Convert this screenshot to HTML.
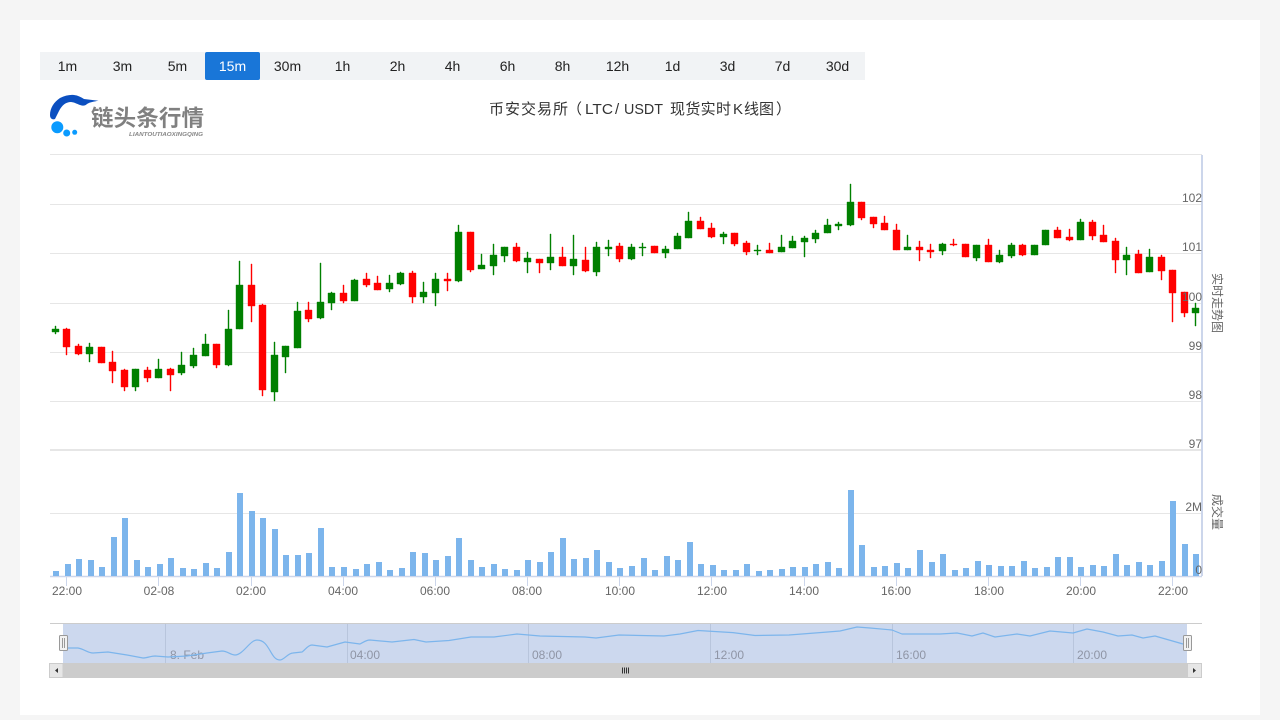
<!DOCTYPE html>
<html lang="zh"><head><meta charset="utf-8"><title>币安交易所 LTC/USDT</title>
<style>
html,body{margin:0;padding:0;width:1280px;height:720px;overflow:hidden;background:#f5f5f5}
.card{position:absolute;left:20px;top:20px;width:1240px;height:695px;background:#fff}
.bar{position:absolute;left:40px;top:52px;width:825px;height:28px;background:#f1f3f5;display:flex;font:14px/28px "Liberation Sans","Noto Sans CJK SC",sans-serif;color:#222}
.bar span{width:55px;text-align:center}
.bar .on{background:#1976d8;color:#fff;border-radius:2px}
svg{position:absolute;left:0;top:0}
text{font-family:"Liberation Sans","Noto Sans CJK SC",sans-serif}
</style></head><body>
<div class="card"></div>
<div class="bar"><span>1m</span><span>3m</span><span>5m</span><span class="on">15m</span><span>30m</span><span>1h</span><span>2h</span><span>4h</span><span>6h</span><span>8h</span><span>12h</span><span>1d</span><span>3d</span><span>7d</span><span>30d</span></div>
<svg width="1280" height="720" viewBox="0 0 1280 720">
<!-- logo -->
<path d="M50 115C50 108 54 102 60 98C65 95.500 70 94.500 74 95C78 95.500 81 97 84 99L98.500 100.700C94 101.500 90 102 87 104C85 106 83 106 80 105C77 104 75 102.500 71 102C66 102 62 105 59 111L55 119C53 120 50 119 50 115Z" fill="#0b4fc0"/>
<circle cx="57.300" cy="127.300" r="6" fill="#0a9bff"/><circle cx="66.700" cy="133" r="3.500" fill="#0a9bff"/><circle cx="74.700" cy="132.300" r="2.500" fill="#0a9bff"/>
<text x="91" y="126" font-size="22.500" font-weight="700" fill="#808080" textLength="113" lengthAdjust="spacing">链头条行情</text>
<text x="129" y="136" font-size="5.500" font-weight="700" font-style="italic" fill="#888" textLength="74" lengthAdjust="spacingAndGlyphs">LIANTOUTIAOXINGQING</text>
<!-- title -->
<g font-size="15" fill="#333">
<text x="489" y="114" textLength="79" lengthAdjust="spacing">币安交易所</text>
<text x="567" y="114">（</text>
<text x="585" y="114" textLength="28" lengthAdjust="spacingAndGlyphs">LTC</text>
<text x="615" y="114">/</text>
<text x="624" y="114" textLength="39" lengthAdjust="spacingAndGlyphs">USDT</text>
<text x="670" y="114" textLength="61" lengthAdjust="spacing">现货实时</text>
<text x="733" y="114" textLength="10" lengthAdjust="spacingAndGlyphs">K</text>
<text x="744" y="114" textLength="30" lengthAdjust="spacing">线图</text>
<text x="776" y="114">）</text>
</g>
<!-- grid -->
<g stroke="#e6e6e6" stroke-width="1" fill="none">
<path d="M50 154.500H1202M50 204.500H1202M50 253.500H1202M50 303.500H1202M50 352.500H1202M50 401.500H1202M50 513.500H1202"/>
<path d="M50 450H1202" stroke-width="2"/>
</g>
<!-- axes -->
<path d="M1202 155V576" stroke="#ccd6eb" stroke-width="2" fill="none"/>
<path d="M50 576.500H1202" stroke="#ccd6eb" stroke-width="1.500" fill="none"/>
<path d="M66.500 577V586M158.500 577V586M251.500 577V586M343.500 577V586M435.500 577V586M527.500 577V586M619.500 577V586M711.500 577V586M804.500 577V586M896.500 577V586M988.500 577V586M1080.500 577V586M1172.500 577V586" stroke="#ccd6eb" fill="none"/>
<!-- volume -->
<path fill="#7cb5ec" d="M53 571h6V576h-6zM65 564h6V576h-6zM76 559h6V576h-6zM88 560h6V576h-6zM99 567h6V576h-6zM111 537h6V576h-6zM122 518h6V576h-6zM134 560h6V576h-6zM145 567h6V576h-6zM157 564h6V576h-6zM168 558h6V576h-6zM180 568h6V576h-6zM191 569h6V576h-6zM203 563h6V576h-6zM214 568h6V576h-6zM226 552h6V576h-6zM237 493h6V576h-6zM249 511h6V576h-6zM260 518h6V576h-6zM272 529h6V576h-6zM283 555h6V576h-6zM295 555h6V576h-6zM306 553h6V576h-6zM318 528h6V576h-6zM329 567h6V576h-6zM341 567h6V576h-6zM353 569h6V576h-6zM364 564h6V576h-6zM376 562h6V576h-6zM387 570h6V576h-6zM399 568h6V576h-6zM410 552h6V576h-6zM422 553h6V576h-6zM433 560h6V576h-6zM445 556h6V576h-6zM456 538h6V576h-6zM468 560h6V576h-6zM479 567h6V576h-6zM491 564h6V576h-6zM502 569h6V576h-6zM514 570h6V576h-6zM525 560h6V576h-6zM537 562h6V576h-6zM548 552h6V576h-6zM560 538h6V576h-6zM571 559h6V576h-6zM583 558h6V576h-6zM594 550h6V576h-6zM606 562h6V576h-6zM617 568h6V576h-6zM629 566h6V576h-6zM641 558h6V576h-6zM652 570h6V576h-6zM664 556h6V576h-6zM675 560h6V576h-6zM687 542h6V576h-6zM698 564h6V576h-6zM710 565h6V576h-6zM721 570h6V576h-6zM733 570h6V576h-6zM744 564h6V576h-6zM756 571h6V576h-6zM767 570h6V576h-6zM779 569h6V576h-6zM790 567h6V576h-6zM802 567h6V576h-6zM813 564h6V576h-6zM825 562h6V576h-6zM836 568h6V576h-6zM848 490h6V576h-6zM859 545h6V576h-6zM871 567h6V576h-6zM882 566h6V576h-6zM894 563h6V576h-6zM905 568h6V576h-6zM917 550h6V576h-6zM929 562h6V576h-6zM940 554h6V576h-6zM952 570h6V576h-6zM963 568h6V576h-6zM975 561h6V576h-6zM986 565h6V576h-6zM998 566h6V576h-6zM1009 566h6V576h-6zM1021 561h6V576h-6zM1032 568h6V576h-6zM1044 567h6V576h-6zM1055 557h6V576h-6zM1067 557h6V576h-6zM1078 567h6V576h-6zM1090 565h6V576h-6zM1101 566h6V576h-6zM1113 554h6V576h-6zM1124 565h6V576h-6zM1136 562h6V576h-6zM1147 565h6V576h-6zM1159 561h6V576h-6zM1170 501h6V576h-6zM1182 544h6V576h-6zM1193 554h6V576h-6z"/>
<!-- green candles -->
<path fill="#008000" stroke="#008000" stroke-width=".4" stroke-linejoin="round" d="M55 326h1V334h-1zM52 329h7V332h-7zM89 343h1V362h-1zM86 347h7V354h-7zM135 369h1V391h-1zM132 369h7V387h-7zM158 359h1V378h-1zM155 369h7V378h-7zM181 352h1V375h-1zM178 365h7V373h-7zM193 348h1V368h-1zM190 355h7V366h-7zM205 334h1V356h-1zM202 344h7V356h-7zM228 310h1V366h-1zM225 329h7V365h-7zM239 261h1V329h-1zM236 285h7V329h-7zM274 342h1V401h-1zM271 355h7V392h-7zM285 346h1V373h-1zM282 346h7V357h-7zM297 302h1V348h-1zM294 311h7V348h-7zM320 263h1V319h-1zM317 302h7V318h-7zM331 292h1V310h-1zM328 293h7V303h-7zM354 279h1V301h-1zM351 280h7V301h-7zM389 275h1V292h-1zM386 283h7V289h-7zM400 272h1V285h-1zM397 273h7V284h-7zM423 282h1V303h-1zM420 292h7V297h-7zM435 273h1V306h-1zM432 279h7V293h-7zM458 225h1V282h-1zM455 232h7V281h-7zM481 254h1V269h-1zM478 265h7V269h-7zM493 244h1V275h-1zM490 255h7V266h-7zM504 247h1V262h-1zM501 247h7V256h-7zM527 252h1V273h-1zM524 258h7V262h-7zM550 234h1V270h-1zM547 257h7V263h-7zM573 235h1V275h-1zM570 259h7V266h-7zM596 242h1V276h-1zM593 247h7V272h-7zM608 240h1V256h-1zM605 247h7V249h-7zM631 244h1V260h-1zM628 247h7V259h-7zM642 243h1V256h-1zM639 247h7V248h-7zM665 246h1V258h-1zM662 249h7V253h-7zM677 233h1V249h-1zM674 236h7V249h-7zM688 212h1V238h-1zM685 221h7V238h-7zM723 232h1V244h-1zM720 234h7V237h-7zM757 245h1V255h-1zM754 250h7V251h-7zM781 235h1V252h-1zM778 247h7V252h-7zM792 236h1V248h-1zM789 241h7V248h-7zM804 236h1V257h-1zM801 238h7V242h-7zM815 230h1V243h-1zM812 233h7V239h-7zM827 219h1V233h-1zM824 225h7V233h-7zM838 222h1V230h-1zM835 224h7V226h-7zM850 184h1V226h-1zM847 202h7V225h-7zM907 235h1V250h-1zM904 247h7V250h-7zM942 243h1V255h-1zM939 244h7V251h-7zM976 245h1V261h-1zM973 245h7V258h-7zM999 250h1V263h-1zM996 255h7V262h-7zM1011 243h1V258h-1zM1008 245h7V256h-7zM1034 245h1V255h-1zM1031 245h7V255h-7zM1045 230h1V245h-1zM1042 230h7V245h-7zM1080 219h1V240h-1zM1077 222h7V240h-7zM1126 247h1V275h-1zM1123 255h7V260h-7zM1149 249h1V272h-1zM1146 257h7V272h-7zM1195 303h1V326h-1zM1192 308h7V313h-7z"/>
<!-- red candles -->
<path fill="#ff0000" stroke="#ff0000" stroke-width=".4" stroke-linejoin="round" d="M66 328h1V355h-1zM63 329h7V347h-7zM78 344h1V355h-1zM75 346h7V354h-7zM101 347h1V363h-1zM98 347h7V363h-7zM112 351h1V383h-1zM109 362h7V371h-7zM124 369h1V391h-1zM121 370h7V387h-7zM147 367h1V382h-1zM144 370h7V378h-7zM170 368h1V391h-1zM167 369h7V375h-7zM216 344h1V368h-1zM213 344h7V365h-7zM251 264h1V322h-1zM248 285h7V306h-7zM262 304h1V396h-1zM259 305h7V390h-7zM308 302h1V322h-1zM305 310h7V319h-7zM343 285h1V303h-1zM340 293h7V301h-7zM366 273h1V287h-1zM363 279h7V285h-7zM377 276h1V290h-1zM374 283h7V290h-7zM412 271h1V303h-1zM409 273h7V297h-7zM447 273h1V291h-1zM444 279h7V281h-7zM470 232h1V272h-1zM467 232h7V270h-7zM516 243h1V262h-1zM513 247h7V261h-7zM539 259h1V273h-1zM536 259h7V263h-7zM562 247h1V266h-1zM559 257h7V266h-7zM585 247h1V272h-1zM582 260h7V271h-7zM619 243h1V262h-1zM616 246h7V259h-7zM654 246h1V253h-1zM651 246h7V253h-7zM700 217h1V229h-1zM697 221h7V229h-7zM711 223h1V238h-1zM708 228h7V237h-7zM734 233h1V246h-1zM731 233h7V244h-7zM746 241h1V255h-1zM743 243h7V252h-7zM769 243h1V253h-1zM766 250h7V253h-7zM861 202h1V220h-1zM858 202h7V218h-7zM873 217h1V228h-1zM870 217h7V224h-7zM884 216h1V230h-1zM881 223h7V230h-7zM896 224h1V250h-1zM893 230h7V250h-7zM919 241h1V261h-1zM916 247h7V250h-7zM930 244h1V258h-1zM927 250h7V252h-7zM953 239h1V246h-1zM950 244h7V245h-7zM965 244h1V257h-1zM962 244h7V257h-7zM988 239h1V262h-1zM985 245h7V262h-7zM1022 244h1V256h-1zM1019 245h7V255h-7zM1057 227h1V238h-1zM1054 230h7V238h-7zM1069 229h1V241h-1zM1066 237h7V240h-7zM1092 220h1V240h-1zM1089 222h7V236h-7zM1103 225h1V242h-1zM1100 235h7V242h-7zM1115 238h1V273h-1zM1112 241h7V260h-7zM1138 250h1V273h-1zM1135 254h7V273h-7zM1161 255h1V280h-1zM1158 257h7V271h-7zM1172 270h1V322h-1zM1169 270h7V293h-7zM1184 292h1V317h-1zM1181 292h7V313h-7z"/>
<!-- y labels -->
<g font-size="12" fill="#666" text-anchor="end">
<text x="1202" y="202">102</text><text x="1202" y="251">101</text><text x="1202" y="301">100</text><text x="1202" y="350">99</text><text x="1202" y="399">98</text><text x="1202" y="448">97</text><text x="1202" y="511">2M</text><text x="1202" y="574">0</text>
</g>
<g font-size="12" fill="#666">
<text transform="translate(1213 273) rotate(90)">实时走势图</text>
<text transform="translate(1213 494) rotate(90)">成交量</text>
</g>
<!-- x labels -->
<g font-size="12" fill="#666" text-anchor="middle">
<text x="67" y="595">22:00</text><text x="159" y="595">02-08</text><text x="251" y="595">02:00</text><text x="343" y="595">04:00</text><text x="435" y="595">06:00</text><text x="527" y="595">08:00</text><text x="620" y="595">10:00</text><text x="712" y="595">12:00</text><text x="804" y="595">14:00</text><text x="896" y="595">16:00</text><text x="989" y="595">18:00</text><text x="1081" y="595">20:00</text><text x="1173" y="595">22:00</text>
</g>
<!-- navigator -->
<rect x="63" y="624" width="1124" height="39" fill="#ccd8ee"/>
<path d="M50 623.500H1202" stroke="#ccc" fill="none"/>
<path d="M165.500 624V663M347.500 624V663M528.500 624V663M710.500 624V663M892.500 624V663M1073.500 624V663" stroke="#b8c5dc" fill="none"/>
<g font-size="12" fill="#8f95a5">
<text x="170" y="659">8. Feb</text><text x="350" y="659">04:00</text><text x="532" y="659">08:00</text><text x="714" y="659">12:00</text><text x="896" y="659">16:00</text><text x="1077" y="659">20:00</text>
</g>
<path fill="none" stroke="#7cb5ec" stroke-width="1.200" stroke-linejoin="round" d="M67 648L78 648C84 649 88 653 93 653L108 652L127 655L143 658C147 658 151 656 155 656L168 657L187 656L207 653L222 651C227 651 231 655 235 655C243 655 250 640 257 640C270 640 270 660 280 660C284 660 288 653 293 653L302 652C305 650 308 645 312 645L327 647L345 642L360 644C364 642 366 640 370 640L392 642L414 639.500L426 642L449 640.500L471 637L494 637L517 634L540 636L585 637L596 638L619 635L664 636L680 634L698 630.500L733 632.600L755 635.500L789 635L823 632.400L840 631L857 627L870 628L892 630L902 634L940 634L957 633L972 636L983 633L995 637L1017 634L1030 636L1050 631L1073 633L1087 629L1103 632L1118 636L1132 635L1143 638L1155 636L1183 644"/>
<!-- handles -->
<g fill="#f2f2f2" stroke="#999" stroke-width="1">
<rect x="59.500" y="635.500" width="8" height="15" rx="1"/>
<rect x="1183.500" y="635.500" width="8" height="15" rx="1"/>
</g>
<path d="M62.500 638V648M64.500 638V648M1186.500 638V648M1188.500 638V648" stroke="#999" fill="none"/>
<!-- scrollbar -->
<rect x="63" y="663" width="1124" height="15" fill="#ccc"/>
<rect x="49.500" y="663.500" width="13.500" height="14" fill="#e6e6e6" stroke="#ccc"/>
<rect x="1187.500" y="663.500" width="14" height="14" fill="#e6e6e6" stroke="#ccc"/>
<path d="M55 670.500L58 668V673ZM1193 668L1196 670.500L1193 673Z" fill="#333"/>
<path d="M622.500 667.500V673.500M624.500 667.500V673.500M626.500 667.500V673.500M628.500 667.500V673.500" stroke="#333" fill="none"/>
</svg>
</body></html>
